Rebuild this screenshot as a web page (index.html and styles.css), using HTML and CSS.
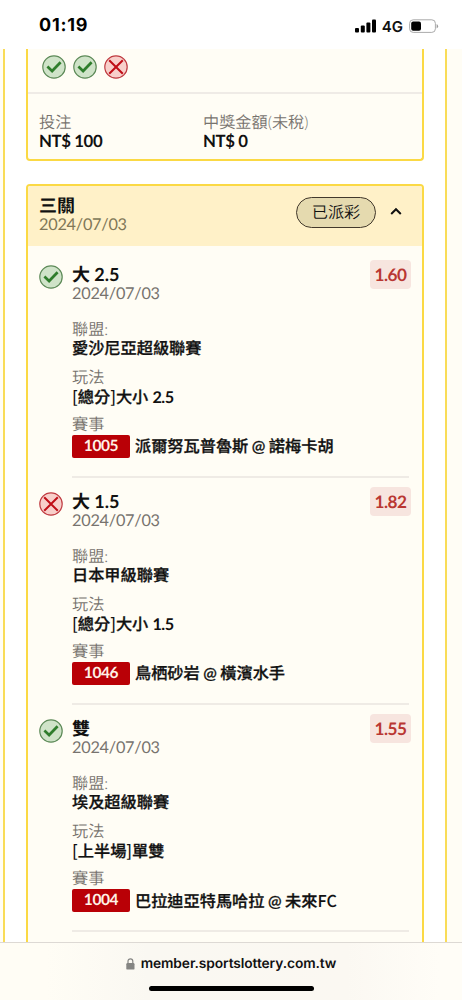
FILE: index.html
```html
<!DOCTYPE html>
<html lang="zh-Hant">
<head>
<meta charset="utf-8">
<title>投注紀錄</title>
<link rel="stylesheet" href="styles.css">
</head>
<body>
<svg class="defs" width="0" height="0">
  <symbol id="win" viewBox="0 0 24 24"><circle cx="12" cy="12" r="11.2" fill="#cfe3c8" stroke="#5d8a58" stroke-width="1.2"/><path d="M5.4 11.6l4.7 4.4L18.6 7.2" fill="none" stroke="#2f7d2c" stroke-width="2.7"/></symbol>
  <symbol id="lose" viewBox="0 0 24 24"><circle cx="12" cy="12" r="11.2" fill="#f8cfca" stroke="#bf3a40" stroke-width="1.2"/><path d="M5.2 5.2l13.6 13.6M18.8 5.2L5.2 18.8" fill="none" stroke="#c00d16" stroke-width="2"/></symbol>
</svg>
<div class="screen">
  <header class="status">
    <span class="clock">01:19</span>
    <div class="signals">
      <svg width="22" height="14" viewBox="0 0 22 14"><rect x="0" y="9" width="4" height="4.5" rx="1"/><rect x="5.8" y="6.5" width="4" height="7" rx="1"/><rect x="11.4" y="3.4" width="4" height="10.1" rx="1"/><rect x="17" y="0.4" width="4" height="13.1" rx="1"/></svg>
      <span class="net">4G</span>
      <svg width="30" height="14" viewBox="0 0 30 14"><rect x="0.6" y="0.8" width="25.8" height="12.6" rx="3.6" fill="none" stroke="#aaa"/><rect x="2.2" y="2.5" width="9.8" height="9.2" rx="2"/><path d="M27.6 5v4.4q1.5-.7 1.5-2.2T27.6 5z" fill="#999"/></svg>
    </div>
  </header>
  <main class="page">
    <div class="frame">
      <section class="ticket previous">
        <div class="results">
          <svg class="mark"><use href="#win"/></svg>
          <svg class="mark"><use href="#win"/></svg>
          <svg class="mark"><use href="#lose"/></svg>
        </div>
        <div class="totals">
          <div><div class="label">投注</div><div class="amount">NT$ 100</div></div>
          <div><div class="label">中獎金額(未稅)</div><div class="amount">NT$ 0</div></div>
        </div>
      </section>
      <section class="ticket current">
        <div class="head">
          <div class="head-text"><div class="kind">三關</div><div class="date">2024/07/03</div></div>
          <span class="pill">已派彩</span>
          <svg class="chevron" width="12" height="9" viewBox="0 0 12 9"><path d="M1.2 7L6 2.2 10.8 7" fill="none" stroke="#111" stroke-width="2"/></svg>
        </div>
        <article class="bet">
          <svg class="mark"><use href="#win"/></svg>
          <div class="body">
            <div class="top"><div><div class="pick">大 2.5</div><div class="date">2024/07/03</div></div><span class="odds">1.60</span></div>
            <div class="label">聯盟:</div><div class="value">愛沙尼亞超級聯賽</div>
            <div class="label">玩法</div><div class="value"><span class="br">[</span>總分<span class="br">]</span>大小 <b>2.5</b></div>
            <div class="label">賽事</div><div class="game"><span class="tag">1005</span><span>派爾努瓦普魯斯 @ 諾梅卡胡</span></div>
          </div>
        </article>
        <article class="bet">
          <svg class="mark"><use href="#lose"/></svg>
          <div class="body">
            <div class="top"><div><div class="pick">大 1.5</div><div class="date">2024/07/03</div></div><span class="odds">1.82</span></div>
            <div class="label">聯盟:</div><div class="value">日本甲級聯賽</div>
            <div class="label">玩法</div><div class="value"><span class="br">[</span>總分<span class="br">]</span>大小 <b>1.5</b></div>
            <div class="label">賽事</div><div class="game"><span class="tag">1046</span><span>鳥栖砂岩 @ 橫濱水手</span></div>
          </div>
        </article>
        <article class="bet">
          <svg class="mark"><use href="#win"/></svg>
          <div class="body">
            <div class="top"><div><div class="pick">雙</div><div class="date">2024/07/03</div></div><span class="odds">1.55</span></div>
            <div class="label">聯盟:</div><div class="value">埃及超級聯賽</div>
            <div class="label">玩法</div><div class="value"><span class="br">[</span>上半場<span class="br">]</span>單雙</div>
            <div class="label">賽事</div><div class="game"><span class="tag">1004</span><span>巴拉迪亞特馬哈拉 @ 未來<span class="br">FC</span></span></div>
          </div>
        </article>
      </section>
    </div>
  </main>
  <footer class="browser">
    <div class="address">
      <svg width="9" height="12" viewBox="0 0 9 12"><rect x="0.3" y="5" width="8.2" height="6.6" rx="1.2" fill="#858583"/><path d="M2 5.5V3.2a2.4 2.4 0 0 1 4.8 0v2.3" fill="none" stroke="#858583" stroke-width="1.2"/></svg>
      <span>member.sportslottery.com.tw</span>
    </div>
    <div class="home"></div>
  </footer>
</div>
</body>
</html>
```
FILE: styles.css
```css
* { box-sizing: border-box; }
body { margin: 0; background: #fff; }
.defs { position: absolute; }
.screen {
  width: 462px;
  height: 1000px;
  display: flex;
  flex-direction: column;
  overflow: hidden;
  font-family: Lato, "Noto Sans CJK TC", sans-serif;
  font-size: 16.2px;
  color: #111;
  text-rendering: geometricPrecision;
}
.status {
  flex: none;
  height: 49px;
  padding: 2px 23px 0 39px;
  display: flex;
  align-items: center;
  justify-content: space-between;
  font-family: Inter, sans-serif;
}
.clock { font-size: 18px; font-weight: 700; color: #000; letter-spacing: 0.8px; }
.signals { display: flex; align-items: center; }
.net { font-size: 15px; font-weight: 600; margin: 1px 6px 0 5px; }
.page {
  flex: none;
  height: 893px;
  padding: 0 15px 0 3px;
  background: #fffdf5;
  overflow: hidden;
}
.frame {
  height: 893px;
  padding: 0 21px;
  background: #fff;
  border: solid #f9dc57;
  border-width: 0 2px;
}
.ticket {
  border: 2px solid #fbd944;
  border-radius: 4px;
  background: #fffdf5;
  overflow: hidden;
}
.previous { border-top: 0; border-radius: 0 0 4px 4px; height: 112px; margin-bottom: 23px; }
.current { height: 800px; }
.results { display: flex; gap: 7px; height: 45px; padding: 6px 0 0 14px; border-bottom: 2px solid #efebe6; }
.mark { width: 24px; height: 24px; flex: none; }
.totals { display: grid; grid-template-columns: 164px 1fr; padding: 19px 0 0 11px; }
.label { height: 19px; line-height: 19px; color: #77736e; font-weight: 350; white-space: nowrap; }
.amount { height: 18px; line-height: 18px; font-size: 16.8px; font-weight: 700; letter-spacing: -0.4px; }
.head { display: flex; align-items: center; height: 60px; padding: 0 20px 0 11px; background: #fff1c8; }
.head-text { flex: 1; margin-top: -3px; }
.kind { font-size: 18px; line-height: 21px; font-weight: 700; }
.date { line-height: 18px; color: #77736e; font-size: 16.3px; letter-spacing: -0.25px; }
.head .date { color: #807757; }
.pill {
  width: 80px;
  height: 31px;
  margin: -8px 14px 0 0;
  border: 1.5px solid #42382b;
  border-radius: 16px;
  background: #e5daaf;
  text-align: center;
  font-weight: 350;
  line-height: 29px;
}
.chevron { margin-top: -9px; }
.bet { display: flex; gap: 9px; height: 227px; padding: 0 13px 0 11px; }
.head + .bet { margin-top: 5px; }
.bet .mark { margin-top: 14px; }
.body { flex: 1; padding-top: 12px; border-bottom: 2px solid #efebe5; }
.top { display: flex; justify-content: space-between; height: 57px; }
.pick { height: 22px; line-height: 22px; font-size: 18px; font-weight: 700; }
.odds {
  width: 41px;
  height: 29px;
  margin: -3px -2px 0 0;
  border-radius: 4px;
  background: #f7e5df;
  color: #b93732;
  font-size: 17.2px;
  font-weight: 700;
  letter-spacing: -0.5px;
  line-height: 30px;
  text-align: center;
}
.value, .game { -webkit-text-stroke: 0.3px currentColor; }
.value b, .br, .tag { -webkit-text-stroke: 0; }
.value { height: 20px; line-height: 20px; margin-bottom: 9px; font-weight: 500; white-space: nowrap; }
.value b { letter-spacing: -0.4px; word-spacing: -1px; }
.value ~ .value { margin-bottom: 8px; line-height: 19px; }
.game { display: flex; align-items: center; gap: 5px; margin-top: 1px; height: 23px; line-height: 21px; font-weight: 500; word-spacing: -0.6px; white-space: nowrap; }
.br { font-family: "Noto Sans CJK TC", sans-serif; font-weight: 500; }
.tag { width: 58px; height: 23px; border-radius: 2px; background: #b90006; color: #fff1e7; font-size: 15.5px; font-weight: 700; letter-spacing: -0.4px; line-height: 23px; text-align: center; }
.browser {
  flex: none;
  height: 58px;
  display: flex;
  flex-direction: column;
  align-items: center;
  border-top: 1px solid #ddd9d4;
  background: linear-gradient(90deg, #fffdf5 10%, #faf8f2 32%, #fbf8f2 75%, #fffdf7 95%);
}
.address { display: flex; align-items: center; gap: 6px; height: 42px; font-family: Inter, sans-serif; font-size: 13.8px; font-weight: 600; letter-spacing: -0.1px; }
.home { width: 165px; height: 5px; margin-top: 1px; border-radius: 3px; background: #000; }
```
